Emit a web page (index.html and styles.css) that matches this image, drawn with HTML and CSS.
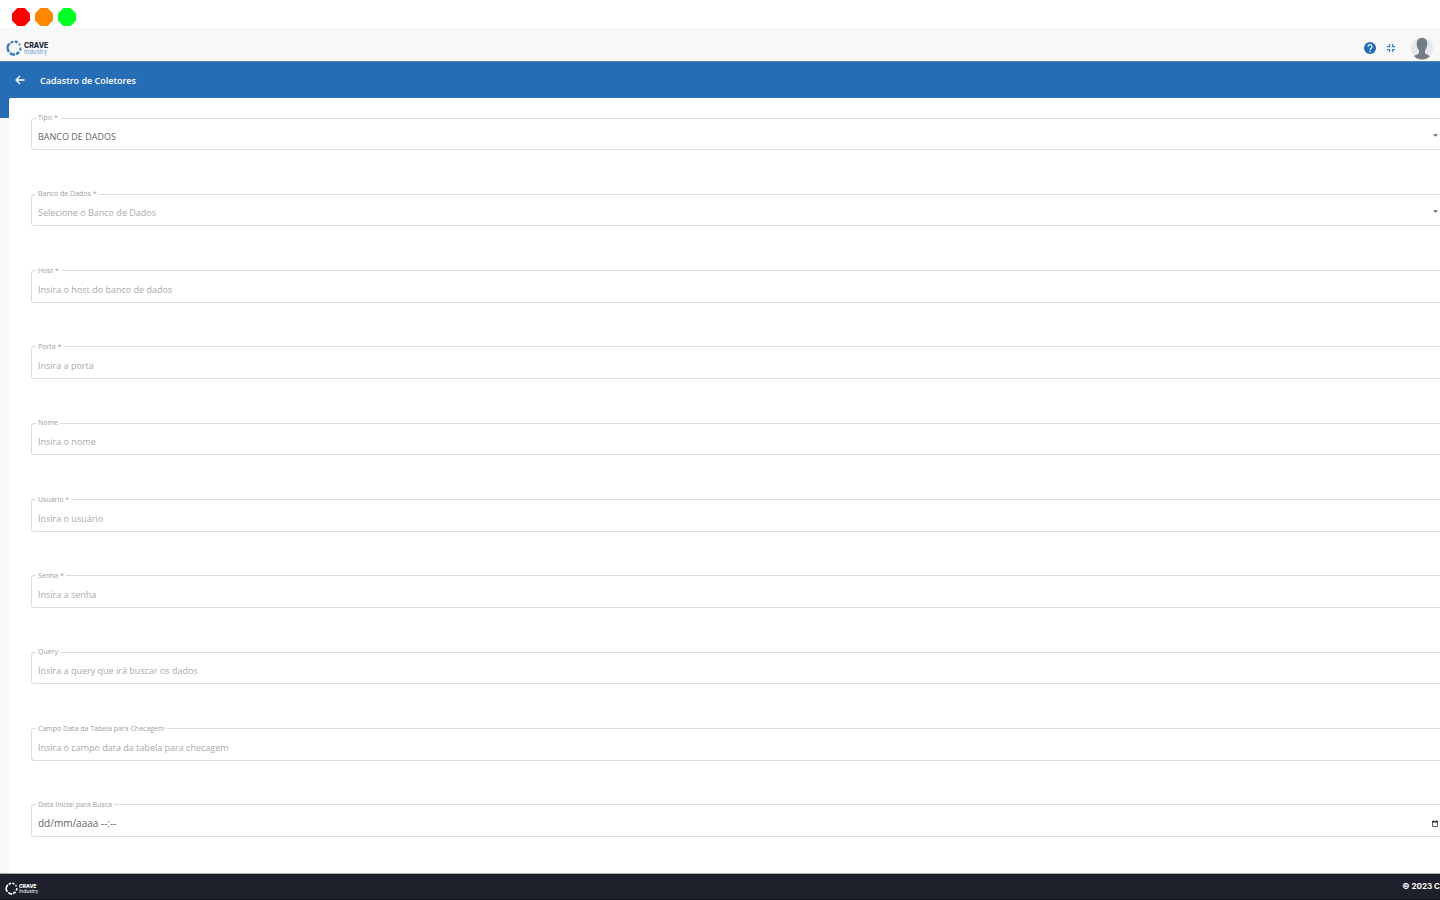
FILE: index.html
```html
<!DOCTYPE html>
<html lang="pt-BR">
<head>
  <meta charset="UTF-8">
  <meta name="viewport" content="width=device-width, initial-scale=1.0">
  <title>Cadastro de Coletores</title>
  <link rel="stylesheet" href="styles.css">
</head>
<body>
  <div class="window-bar">
    <span class="dot dot-red"></span>
    <span class="dot dot-orange"></span>
    <span class="dot dot-green"></span>
  </div>

  <header class="topbar">
    <a class="logo" href="#" aria-label="Crave Industry">
      <svg class="logo-mark" viewBox="0 0 32 32" fill="none" stroke="#3a7cbc" stroke-width="4">
        <path d="M7 7 A13 13 0 0 0 6 24" stroke-width="5"/>
        <path d="M8 26 A13 13 0 0 0 18 29" stroke-width="5"/>
        <path d="M20 28 A13 13 0 0 0 26 24" stroke-width="5"/>
        <path d="M28 21 A13 13 0 0 0 29 15" stroke-width="4"/>
        <path d="M9 6 A13 13 0 0 1 15 3"/>
        <path d="M18 3 A13 13 0 0 1 23 5" stroke-width="5"/>
        <circle cx="27" cy="9" r="1.500" stroke-width="2"/>
      </svg>
      <span class="logo-text"><b>CRAVE</b><span>Industry</span></span>
    </a>
    <nav class="actions">
      <button type="button" class="icon-btn" aria-label="Ajuda">
        <svg width="12" height="12" viewBox="0 0 24 24">
          <circle cx="12" cy="12" r="12" fill="#246db6"/>
          <path d="M8 9.500a4 4 0 1 1 6.500 3c-1.700 1.200-2.500 1.700-2.500 3.500" fill="none" stroke="#fff" stroke-width="2.200"/>
          <circle cx="12" cy="19" r="1.500" fill="#fff"/>
        </svg>
      </button>
      <button type="button" class="icon-btn" aria-label="Sair da tela cheia">
        <svg width="8" height="8" viewBox="0 0 16 16" fill="none" stroke="#3b7dbd" stroke-width="2.500">
          <path d="M0 5h5V0M11 0v5h5M16 11h-5v5M5 16v-5H0"/>
        </svg>
      </button>
      <button type="button" class="icon-btn avatar" aria-label="Perfil">
        <svg width="22" height="24" viewBox="0 0 22 24">
          <circle cx="11" cy="12" r="11" fill="#e6e8eb"/>
          <path d="M11 2c3.600 0 5.300 2.300 5.300 5.500 0 3.300-1 5.300-2.300 6.700v3c1 1.300 3.600 1.600 5 3-2 2-5 3.300-8 3.300s-6-1.300-8-3.300c1.400-1.400 4-1.700 5-3v-3C6.700 12.800 5.700 10.800 5.700 7.500 5.700 4.300 7.400 2 11 2z" fill="#747d86"/>
        </svg>
      </button>
    </nav>
  </header>

  <div class="titlebar">
    <button type="button" class="icon-btn" aria-label="Voltar">
      <svg width="10" height="10" viewBox="0 0 20 20" fill="none" stroke="#fff" stroke-width="2.600">
        <path d="M19 10H2M10 2l-8 8 8 8"/>
      </svg>
    </button>
    <h1>Cadastro de Coletores</h1>
  </div>

  <main class="content">
    <form class="card">
      <fieldset class="field">
        <legend><label for="tipo">Tipo *</label></legend>
        <select id="tipo">
          <option>BANCO DE DADOS</option>
        </select>
        <svg class="arrow" viewBox="0 0 4 2"><path d="M0 0h4L2 2z" fill="#666"/></svg>
      </fieldset>
      <fieldset class="field">
        <legend><label for="banco">Banco de Dados *</label></legend>
        <select id="banco" class="empty">
          <option>Selecione o Banco de Dados</option>
        </select>
        <svg class="arrow" viewBox="0 0 4 2"><path d="M0 0h4L2 2z" fill="#666"/></svg>
      </fieldset>
      <fieldset class="field">
        <legend><label for="host">Host *</label></legend>
        <input type="text" id="host" placeholder="Insira o host do banco de dados">
      </fieldset>
      <fieldset class="field">
        <legend><label for="porta">Porta *</label></legend>
        <input type="text" id="porta" placeholder="Insira a porta">
      </fieldset>
      <fieldset class="field">
        <legend><label for="nome">Nome</label></legend>
        <input type="text" id="nome" placeholder="Insira o nome">
      </fieldset>
      <fieldset class="field">
        <legend><label for="usuario">Usuário *</label></legend>
        <input type="text" id="usuario" placeholder="Insira o usuário">
      </fieldset>
      <fieldset class="field">
        <legend><label for="senha">Senha *</label></legend>
        <input type="password" id="senha" placeholder="Insira a senha">
      </fieldset>
      <fieldset class="field">
        <legend><label for="query">Query</label></legend>
        <input type="text" id="query" placeholder="Insira a query que irá buscar os dados">
      </fieldset>
      <fieldset class="field">
        <legend><label for="campo">Campo Data da Tabela para Checagem</label></legend>
        <input type="text" id="campo" placeholder="Insira o campo data da tabela para checagem">
      </fieldset>
      <fieldset class="field">
        <legend><label for="data">Data Inicial para Busca</label></legend>
        <input type="text" id="data" class="date" placeholder="dd/mm/aaaa --:--">
        <button type="button" class="icon-btn picker" aria-label="Abrir calendário">
          <svg width="6" height="7" viewBox="0 0 12 14" fill="none" stroke="#333">
            <path d="M1 3h10v10H1z" stroke-width="1.600"/>
            <path d="M0 3.500h12" stroke-width="3"/>
            <path d="M3 0v3M9 0v3" stroke-width="1.500"/>
          </svg>
        </button>
      </fieldset>
    </form>
  </main>

  <footer class="footer">
    <a class="logo logo-light" href="#" aria-label="Crave Industry">
      <svg class="logo-mark" viewBox="0 0 32 32" fill="none" stroke="#fff" stroke-width="4">
        <path d="M7 7 A13 13 0 0 0 6 24"/>
        <path d="M8 26 A13 13 0 0 0 18 29"/>
        <path d="M20 28 A13 13 0 0 0 26 24"/>
        <path d="M28 21 A13 13 0 0 0 29 15"/>
        <path d="M9 6 A13 13 0 0 1 15 3"/>
        <path d="M18 3 A13 13 0 0 1 23 5"/>
        <circle cx="27" cy="9" r="1.500" stroke-width="2"/>
      </svg>
      <span class="logo-text"><b>CRAVE</b><span>Industry</span></span>
    </a>
    <span class="copyright">© 2023 C</span>
  </footer>
</body>
</html>
```

FILE: styles.css
```css
* {
  box-sizing: border-box;
}

body {
  display: flex;
  flex-direction: column;
  min-height: 100vh;
  margin: 0;
  overflow-x: hidden;
  background-color: #fff;
  color: #666;
  font-family: "Open Sans", "Noto Sans", sans-serif;
  font-size: 9px;
}

.window-bar {
  display: flex;
  gap: 5px;
  height: 28px;
  padding: 8px 12px 0;
}

.dot {
  width: 18px;
  height: 18px;
  clip-path: polygon(30% 0, 70% 0, 100% 30%, 100% 70%, 70% 100%, 30% 100%, 0 70%, 0 30%);
}

.dot-red {
  background-color: #f00;
}

.dot-orange {
  background-color: #ff8800;
}

.dot-green {
  background-color: #00ff22;
}

.topbar {
  display: flex;
  align-items: center;
  justify-content: space-between;
  height: 34px;
  padding: 6px 7px 0 6px;
  background-color: #f8f8f8;
  border-bottom: 1px solid #5f87ad;
}

.logo {
  display: flex;
  align-items: center;
  gap: 2px;
  color: #20283a;
  text-decoration: none;
}

.logo-mark {
  width: 16px;
  height: 16px;
}

.logo-text {
  display: flex;
  flex-direction: column;
  padding-top: 1px;
  font-family: "Inter", sans-serif;
  font-size: 7px;
  line-height: 7px;
}

.logo-text b {
  font-weight: 800;
}

.logo-text span {
  color: #6b9fd0;
  font-size: 6px;
  line-height: 6px;
}

.actions {
  display: flex;
  align-items: center;
}

.icon-btn {
  display: flex;
  padding: 0;
  border: none;
  background: none;
  cursor: pointer;
}

.actions .icon-btn {
  margin-left: 11px;
}

.actions .avatar {
  margin-left: 16px;
}

.titlebar {
  display: flex;
  align-items: center;
  gap: 15px;
  height: 36px;
  padding: 0 15px;
  background-color: #256db5;
  color: #fff;
}

.titlebar h1 {
  margin: 0;
  font-size: 9px;
  font-weight: 600;
}

.content {
  display: flex;
  flex: 1;
  padding-left: 9px;
  background: linear-gradient(#256db5 20px, #f8f8f8 20px);
}

.card {
  display: flex;
  flex: 1;
  flex-direction: column;
  justify-content: space-between;
  padding: 16px 0 36px 22px;
  background-color: #fff;
  border-top-left-radius: 2px;
}

.field {
  display: flex;
  align-items: center;
  min-width: 0;
  height: 36px;
  margin: 0;
  padding: 0 2px 0 4px;
  border: 1px solid #ddd;
  border-right: none;
  border-radius: 3px 0 0 3px;
}

.field legend {
  padding: 0 2px;
  color: #a0a0a0;
  font-size: 7px;
  line-height: 8px;
}

.field label {
  display: block;
}

.field input,
.field select {
  flex: 1;
  min-width: 0;
  height: 26px;
  padding: 3px 2px 0;
  border: none;
  outline: none;
  appearance: none;
  background: none;
  color: #666;
  font-family: inherit;
  font-size: 9px;
}

.field input::placeholder,
.field .empty {
  color: #aaa;
  opacity: 1;
}

.field .date {
  font-size: 10px;
}

.field .date::placeholder {
  color: #666;
}

.picker {
  padding-top: 3px;
}

.arrow {
  width: 5px;
  height: 3px;
}

.footer {
  display: flex;
  align-items: center;
  justify-content: space-between;
  height: 27px;
  padding-left: 5px;
  border-top: 1px solid #aaa;
  border-bottom: 1px solid #11131d;
  background-color: #1e212b;
  color: #fff;
}

.logo-light,
.logo-light .logo-text span {
  color: #fff;
}

.logo-light {
  gap: 1px;
  padding-top: 3px;
}

.logo-light .logo-mark {
  width: 13px;
  height: 13px;
}

.logo-light .logo-text,
.logo-light .logo-text span {
  font-size: 5px;
  line-height: 5px;
}

.copyright {
  padding-bottom: 2px;
  font-family: "Inter", sans-serif;
  font-size: 8px;
  font-weight: 700;
  white-space: nowrap;
}
```
